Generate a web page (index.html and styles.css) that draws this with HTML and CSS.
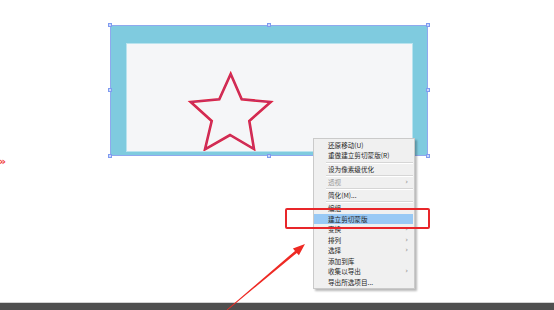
FILE: index.html
```html
<!DOCTYPE html>
<html lang="zh">
<head>
<meta charset="utf-8">
<link rel="stylesheet" href="styles.css">
</head>
<body>
<div class="canvas">
  <div class="artboard">
    <div class="board">
      <svg class="star" viewBox="127 44 285 107" width="285" height="107">
        <path class="star-red" d="M230.7 74 L241.7 99.3 L270.7 102 L249.3 121 L254 149 L230 135 L205 149.3 L211.7 121 L190.7 102 L219.3 99.3 Z"/>
        <path class="star-sel" d="M230.7 74 L241.7 99.3 L270.7 102 L249.3 121 L254 149 L230 135 L205 149.3 L211.7 121 L190.7 102 L219.3 99.3 Z"/>
      </svg>
    </div>
    <span class="handle h-tl"></span><span class="handle h-tc"></span><span class="handle h-tr"></span>
    <span class="handle h-ml"></span><span class="handle h-mr"></span>
    <span class="handle h-bl"></span><span class="handle h-bc"></span><span class="handle h-br"></span>
  </div>

  <span class="left-mark">»</span>

  <ul class="menu">
    <li class="item">还原移动(U)</li>
    <li class="item">重做建立剪切蒙版(R)</li>
    <li class="sep"></li>
    <li class="item">设为像素级优化</li>
    <li class="sep"></li>
    <li class="item disabled sub">透视</li>
    <li class="sep"></li>
    <li class="item">简化(M)...</li>
    <li class="sep"></li>
    <li class="item">编组</li>
    <li class="item active">建立剪切蒙版</li>
    <li class="item sub">变换</li>
    <li class="item sub">排列</li>
    <li class="item sub">选择</li>
    <li class="item">添加到库</li>
    <li class="item sub">收集以导出</li>
    <li class="item">导出所选项目...</li>
  </ul>

  <div class="red-box"></div>

  <svg class="arrow" viewBox="0 0 554 310" width="554" height="310">
    <polygon points="305,244 298.9,255.3 296.8,252.9 227.3,310.3 226.7,309.7 295.0,250.9 292.9,248.5" />
  </svg>
</div>
<div class="bottombar"></div>
</body>
</html>
```

FILE: styles.css
```css
* { box-sizing: border-box; }
html, body {
  margin: 0;
  padding: 0;
  width: 554px;
  height: 310px;
  overflow: hidden;
  background: #ffffff;
}
body {
  display: flex;
  flex-direction: column;
  font-family: "Noto Sans CJK SC", "Noto Sans", sans-serif;
}
.canvas {
  position: relative;
  height: 302px;
  flex: none;
  padding-top: 25px;
  padding-left: 110px;
}
.artboard {
  position: relative;
  width: 318px;
  height: 131px;
  background: #7fcbdf;
  padding: 19px 16px 5px 17px;
  box-shadow: inset 0 0 0 1px #8fa9ee;
}
.board {
  width: 285px;
  height: 107px;
  background: #f5f6f8;
  box-shadow: 0 0 0 1px #b9e3ee;
}
.star { display: block; }
.star-red {
  fill: none;
  stroke: #e0223e;
  stroke-width: 2.6;
  stroke-linejoin: miter;
}
.star-sel {
  fill: none;
  stroke: #7d55c8;
  stroke-width: 0.6;
  opacity: 0.6;
}
.handle {
  position: absolute;
  width: 4px;
  height: 4px;
  background: #c9d6fb;
  border: 1px solid #7f9bf0;
}
.h-tl { left: -2px; top: -2px; }
.h-tc { left: 157px; top: -2px; }
.h-tr { right: -2px; top: -2px; }
.h-ml { left: -2px; top: 63px; }
.h-mr { right: -2px; top: 63px; }
.h-bl { left: -2px; bottom: -2px; }
.h-bc { left: 157px; bottom: -2px; }
.h-br { right: -2px; bottom: -2px; }

.left-mark {
  position: absolute;
  left: -1px;
  top: 156px;
  color: #f03a3a;
  font-family: "DejaVu Sans", sans-serif;
  font-size: 11px;
  font-weight: bold;
  line-height: 12px;
}

.menu {
  position: absolute;
  left: 313px;
  top: 138px;
  width: 102px;
  margin: 0;
  padding: 0.75px 0 1px 0;
  list-style: none;
  background: #f0f0f0;
  border: 1px solid #cacaca;
  box-shadow: 2px 2px 2px rgba(0, 0, 0, 0.28);
}
.item {
  position: relative;
  display: block;
  height: 10.5px;
  line-height: 10.5px;
  padding-left: 14px;
  font-size: 6.6px;
  color: #1e1e1e;
  white-space: nowrap;
}
.item.disabled { color: #9a9a9a; }
.item.active { background: #99c9f5; margin-right: 1px; }
.item.sub::after {
  content: "›";
  position: absolute;
  right: 6px;
  top: 0;
  color: #8a8a8a;
  font-family: "DejaVu Sans", sans-serif;
  font-size: 7px;
}
.sep {
  display: block;
  height: 1px;
  margin: 0.875px 1px 0.875px 12px;
  background: #d6d6d6;
  box-shadow: 0 1px 0 #ffffff;
}

.red-box {
  position: absolute;
  left: 285px;
  top: 208px;
  width: 145px;
  height: 21px;
  border: 2px solid #e8262a;
  border-radius: 2px;
}

.arrow {
  position: absolute;
  left: 0;
  top: 0;
  overflow: visible;
  pointer-events: none;
}
.arrow polygon { fill: #ee2a24; }

.bottombar {
  flex: none;
  height: 8px;
  background: #4f4f4f;
  border-top: 1px solid #d2d2d2;
}
```
